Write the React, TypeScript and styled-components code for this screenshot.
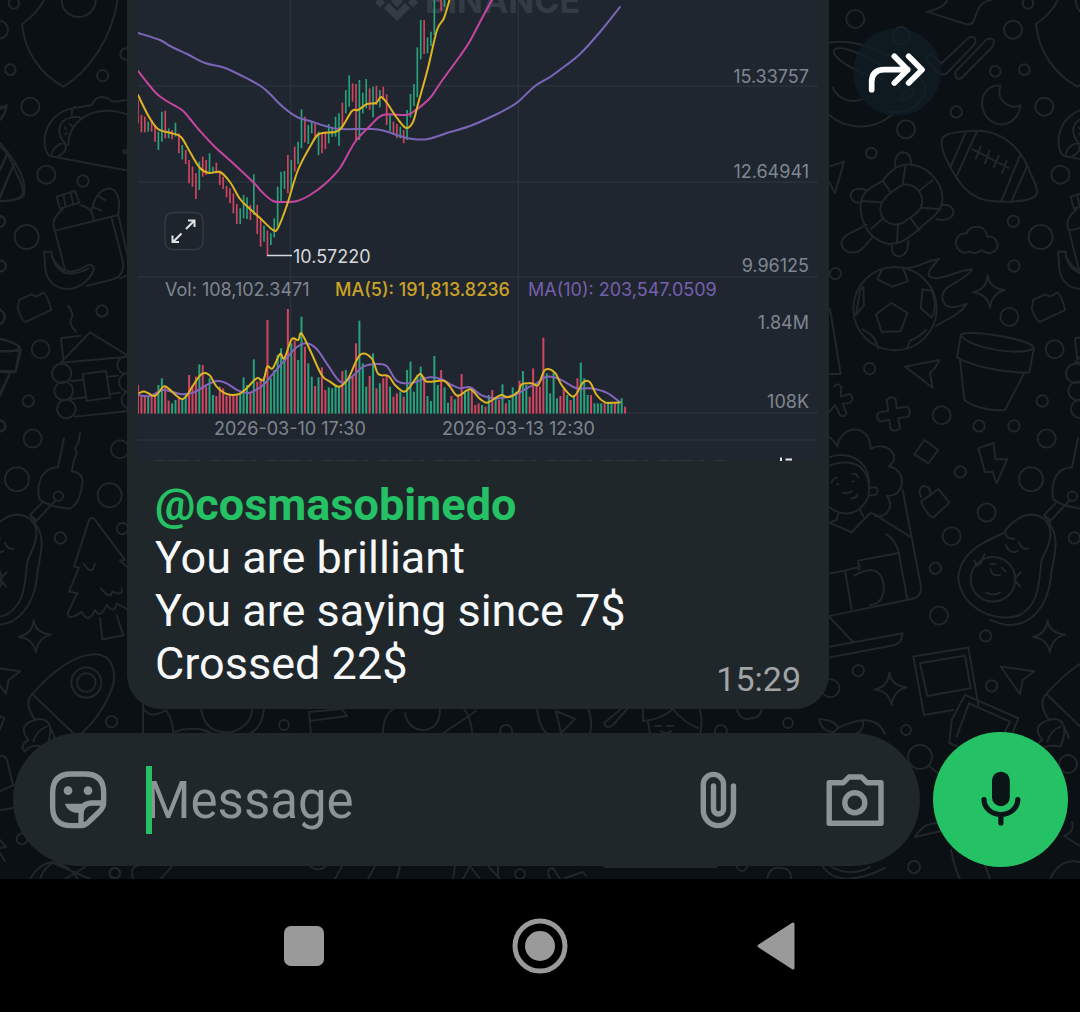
import React from "react";
import styled, { createGlobalStyle } from "styled-components";

const color = {
  wallpaper: "#0a1014",
  doodle: "#20262a",
  surface: "#1f272a",
  accent: "#25c165",
  icon: "#8c9497",
  text: "#f7f8fa",
  time: "#a0a4a6",
  nav: "#9a9a9a",
  up: "#27a27c",
  down: "#d2455f",
  yellow: "#dcb424",
  magenta: "#c645a0",
  purple: "#7a66b8",
  chart: "#20262f",
  grid: "#2b323b",
  label: "#7f8691",
};

const GlobalStyle = createGlobalStyle`
  *, *::before, *::after { box-sizing: border-box; }
  body {
    margin: 0;
    background: #000;
    font-family: Roboto, "Noto Sans", sans-serif;
  }
  button { border: 0; padding: 0; background: none; cursor: pointer; }
  svg { display: block; }
`;

const Screen = styled.div`
  display: flex;
  flex-direction: column;
  min-height: 100vh;
  overflow: hidden;
`;

const Chat = styled.main`
  position: relative;
  isolation: isolate;
  flex: 1;
  display: flex;
  flex-direction: column;
  justify-content: flex-end;
  overflow: hidden;
  background: ${color.wallpaper};
`;

const WallpaperArt = styled.svg`
  position: absolute;
  inset: 0;
  z-index: -1;
  width: 100%;
  height: 100%;
`;

const MessageRow = styled.div`
  display: flex;
  align-items: flex-start;
  gap: 24px;
  padding: 0 139px 0 127px;
`;

const Bubble = styled.article`
  flex: 1;
  min-width: 0;
  border-radius: 0 0 34px 34px;
  background: ${color.surface};
`;

const Photo = styled.figure`
  margin: 0 11px;
  background: ${color.chart};

  svg { width: 100%; height: auto; }
`;

const Caption = styled.div`
  display: flex;
  align-items: flex-end;
  justify-content: space-between;
  padding: 17px 28px 19px;
`;

const CaptionText = styled.p`
  margin: 0;
  color: ${color.text};
  font-size: 45px;
  line-height: 53px;
`;

const Mention = styled.a`
  color: ${color.accent};
  font-weight: 700;
  text-decoration: none;
`;

const Time = styled.time`
  color: ${color.time};
  font-size: 34px;
  line-height: 22px;
`;

const ForwardButton = styled.button`
  flex: none;
  width: 88px;
  height: 88px;
  margin-top: 28px;
  border-radius: 50%;
  background: rgba(17, 28, 36, 0.75);
`;

const Composer = styled.form`
  display: flex;
  align-items: center;
  gap: 13px;
  padding: 23px 12px 12px 13px;
`;

const Field = styled.div`
  flex: 1;
  display: flex;
  align-items: center;
  min-width: 0;
  height: 133px;
  padding: 0 36px;
  border-radius: 67px;
  background: ${color.surface};
`;

const IconButton = styled.button<{ $before?: number }>`
  flex: none;
  width: 58px;
  height: 58px;
  margin-left: ${(p) => p.$before ?? 0}px;
`;

const InputWrap = styled.label`
  position: relative;
  flex: 1;
  min-width: 0;
  margin-left: 39px;
`;

const Caret = styled.span`
  position: absolute;
  left: 0;
  top: 0;
  width: 6px;
  height: 68px;
  background: ${color.accent};
`;

const MessageInput = styled.input`
  display: block;
  width: 100%;
  height: 68px;
  border: 0;
  padding: 2px 0 0;
  outline: 0;
  background: transparent;
  color: ${color.text};
  font: 400 51px/66px Roboto, "Noto Sans", sans-serif;

  &::placeholder { color: ${color.icon}; opacity: 1; }
`;

const MicButton = styled.button`
  flex: none;
  width: 135px;
  height: 135px;
  border-radius: 50%;
  background: ${color.accent};
`;

const NavBar = styled.nav`
  display: flex;
  justify-content: center;
  height: 133px;
  background: #000;
`;

const NavButton = styled.button`
  display: grid;
  place-items: center;
  width: 236px;
`;

/* ---------- chart ---------- */

type Point = [number, number];

// Catmull-Rom spline through the points, as cubic segments.
const smooth = (pts: Point[]) => {
  let d = `M${pts[0][0]} ${pts[0][1]}`;
  for (let i = 0; i < pts.length - 1; i++) {
    const a = pts[i - 1] ?? pts[i];
    const b = pts[i];
    const c = pts[i + 1];
    const e = pts[i + 2] ?? c;
    d += `C${b[0] + (c[0] - a[0]) / 6} ${b[1] + (c[1] - a[1]) / 6} ${c[0] - (e[0] - b[0]) / 6} ${c[1] - (e[1] - b[1]) / 6} ${c[0]} ${c[1]}`;
  }
  return d;
};

const parse = (s: string): Point[] =>
  s.trim().split(/\s+/).map((p) => p.split(",").map(Number) as Point);

const MA_LONG = parse(`138,33 160,40 170,46 187,54 205,63 225,68 250,80 262,87 270,94 283,107 297,117 310,121
 325,126 340,129 372,129 385,131 400,136 413,139 428,139 450,132 470,126 495,115 510,107 519,101 535,86 550,77
 565,66 580,54 600,32 620,7`);
const MA_MID = parse(`138,71 155,92 165,100 182,110 190,119 200,131 215,147 235,165 255,184 262,192 273,201 284,202
 297,201 310,195 325,184 340,168 355,142 370,126 383,115 405,115 413,112 430,98 441,82 460,56 470,41 480,22 493,-2`);
const MA_SHORT = parse(`138,95 149,117 158,129 171,133 181,137 190,152 200,168 209,173 220,172 230,182 240,199 250,209
 262,220 273,230 278,228 287,205 298,170 311,145 319,134 335,132 342,127 352,111 358,110 367,104 376,103 381,97
 387,103 397,118 406,128 413,122 418,104 428,68 437,30 444,18 450,-2`);

const VOL_SHORT = parse(`25,370 45,365 75,378 100,350 115,355 150,385 168,380 190,345 215,312 238,315 260,350 290,372
 325,373 350,355 380,325 400,330 412,290 428,295 450,252 463,265 485,208 505,210 514,190 540,240 575,315 600,335
 628,350 655,325 690,255 725,265 745,312 775,318 795,345 822,365 840,350 870,312 890,335 940,332 960,350 983,378
 1020,358 1048,385 1070,398 1095,385 1115,375 1135,382 1165,365 1175,343 1205,340 1225,345 1245,300 1275,308
 1295,345 1330,380 1360,337 1380,337 1400,375 1425,397 1450,398 1472,397`);
const VOL_LONG = parse(`25,375 60,378 100,360 150,372 190,368 230,345 262,333 290,340 325,362 360,368 400,345 430,310
 465,270 500,232 530,220 560,237 590,280 630,335 660,325 700,290 740,282 770,288 800,332 840,340 900,322 940,330
 965,345 990,355 1020,352 1060,378 1110,385 1160,372 1190,355 1220,340 1250,320 1290,328 1340,355 1380,355
 1430,368 1470,397`);

// high, low, direction for each candle
const CANDLES = `300-370r 345-397r 350-397r 365-395g 360-395r 375-425r 395-450g 335-425g 332-415r 385-415g 390-418r
 368-410g 400-460r 435-478g 450-492r 480-550r 500-560r 520-597r 485-570g 470-530r 480-525r 460-520g 500-520g
 488-520r 512-555r 530-567r 558-592r 565-610r 580-640r 612-672r 625-672g 585-655g 592-657g 615-660r 523-645g
 615-702r 655-740r 677-725g 692-768r 700-735g 655-712g 560-680g 515-605g 513-567g 465-580r 480-570g 440-515r
 425-492g 328-445g 350-427r 375-432g 365-400g 370-410r 395-465g 400-460r 395-447r 372-430g 380-410g 350-410g
 340-437g 308-380r 270-340g 226-320g 250-305r 252-420r 240-420g 278-340g 237-325g 265-330r 260-352g 258-315r
 270-322g 260-300r 283-375r 345-393g 365-405r 372-415r 380-415g 390-430r 330-420g 282-352g 252-318g 142-292g
 60-178g 60-162r 112-160g 95-138g 0-105g 0-2r 0-32r 0-20g`.trim().split(/\s+/);

// top of bar and direction for each period
const VOLUME = `345r 375r 375r 380g 378r 372r 345g 325g 350r 392r 400g 390g 380r 385g 372g 315r 345r 320r 283g 285r
 350r 325g 375g 378r 350r 355r 378r 375r 375r 375r 372g 322g 345g 370r 268g 335r 330r 320g 150r 325g 300g 255g
 235g 265g 117r 220g 212r 270g 140g 230r 280g 320g 348r 322g 292r 360r 352g 355g 348g 350g 303r 300g 325g 320r
 220r 152g 280g 350g 318r 250g 355r 340g 325r 315r 350g 380r 370r 365g 380r 300g 275g 365g 315g 290g 320r 378g
 393g 258g 345g 300r 352g 398g 378r 388g 372r 312r 368g 362g 355r 405r 400r 405g 410r 375g 360r 385g 390r 343g
 400r 390g 352g 365g 332r 303g 345g 380r 295r 345r 350r 203r 310g 370g 308g 385g 378r 355r 375g 390r 375g 325r
 278g 325g 375g 375r 400g 400g 400g 400r 395g 400g 400r 400g 385g 410r`.trim().split(/\s+/);

const STEP = 10.22;
const tone = (s: string) => (s.endsWith("g") ? color.up : color.down);

const chartFont = { fontFamily: "Inter, 'Open Sans', sans-serif" };

const PriceChart = () => (
  <svg viewBox="138 0 680 461" role="img" aria-label="Price and volume chart" style={chartFont}>
    <g stroke={color.grid} strokeWidth="1.5">
      <path d="M138 86H818M138 182H818M138 277H818M621 413H818M138 440H818" />
      <path d="M290.6 0V413M518.3 0V413" />
    </g>

    <g fill="#343b44">
      <path d="M384 8l5-5 8 8 8-8 5 5-13 13zM375 2.500l5-5 5 5-5 5zM408 2.500l5-5 5 5-5 5zM391 1.500l6-6 6 6-6 6z" />
      <text x="425" y="13" fontSize="34" fontWeight="700">BINANCE</text>
    </g>

    <g transform="translate(130 0) scale(.3333)" strokeWidth="5">
      {CANDLES.map((c, i) => {
        const [hi, lo] = c.slice(0, -1).split("-");
        return <path key={i} stroke={tone(c)} d={`M${24 + i * STEP} ${hi}V${lo}`} />;
      })}
    </g>
    <g fill="none" strokeWidth="2" strokeLinejoin="round" strokeLinecap="round">
      <path stroke={color.purple} d={smooth(MA_LONG)} />
      <path stroke={color.magenta} d={smooth(MA_MID)} />
      <path stroke={color.yellow} d={smooth(MA_SHORT)} />
    </g>

    <path d="M267 255.500H292" stroke="#d5d8dc" strokeWidth="1.5" />
    <text x="293" y="263" fontSize="18" fill="#d5d8dc">10.57220</text>

    <rect x="165" y="212.500" width="38" height="37" rx="8" fill="#1e242c" stroke="#333a43" strokeWidth="1.500" />
    <path d="M186 229l8-8M188 220.500h6.500v6.500M181.500 233.500l-8 8M172.500 235.500v6.500h6.500" fill="none" stroke="#dfe2e5" strokeWidth="2" />

    <g fontSize="18" fill={color.label} textAnchor="end">
      <text x="809" y="83">15.33757</text>
      <text x="809" y="178">12.64941</text>
      <text x="809" y="272">9.96125</text>
      <text x="809" y="329">1.84M</text>
      <text x="809" y="408">108K</text>
    </g>

    <g fontSize="18">
      <text x="165" y="296" fill={color.label}>Vol: 108,102.3471</text>
      <text x="335" y="296" fill="#c9a227" fontWeight="500">MA(5): 191,813.8236</text>
      <text x="528" y="296" fill="#7560ae">MA(10): 203,547.0509</text>
      <text x="214" y="435" fill={color.label}>2026-03-10 17:30</text>
      <text x="442" y="435" fill={color.label}>2026-03-13 12:30</text>
    </g>

    <g transform="translate(130 270) scale(.3333)" fill="none">
      {VOLUME.map((v, i) => (
        <path key={i} stroke={tone(v)} strokeWidth="6" d={`M${24 + i * STEP} ${v.slice(0, -1)}V431`} />
      ))}
      <path stroke="#8464bd" strokeWidth="6" d={smooth(VOL_LONG)} />
      <path stroke={color.yellow} strokeWidth="6" d={smooth(VOL_SHORT)} />
    </g>

    <path d="M781 457.500v4M785.500 459.500h6.500" stroke="#e6e8ea" strokeWidth="2" />
    <path d="M155 460.500H730" stroke="#2f363f" strokeWidth="1" strokeDasharray="9 5 20 7 4 11" />
  </svg>
);

/* ---------- wallpaper ---------- */

// x, y, radius
const DOTS: [number, number, number][] = [
  [106, 57, 27], [243, 107, 26], [624, 10, 16], [579, 89, 27], [526, 214, 16], [613, 209, 16],
  [673, 320, 27], [409, 336, 17], [258, 388, 27], [154, 459, 16], [721, 524, 27], [580, 664, 17],
  [662, 711, 36], [582, 798, 17], [46, 821, 17], [568, 951, 27], [704, 1048, 27], [149, 1106, 17],
  [365, 1246, 27], [477, 1278, 17], [582, 1278, 17], [667, 1203, 17], [680, 1316, 27], [421, 1416, 17],
  [633, 1438, 36], [500, 1538, 27], [395, 1609, 27], [763, 1614, 17], [346, 1705, 17], [357, 1847, 27],
  [497, 1908, 17], [115, 2012, 17], [31, 2065, 27], [515, 2058, 17], [911, 1486, 36], [942, 1348, 27],
  [949, 1586, 17], [831, 543, 17], [890, 227, 17], [960, 162, 17], [888, 933, 17],
  [917, 2165, 17], [926, 2620, 16], [648, 2517, 16], [957, 455, 5],
];

const DoodleTile = () => (
  <g id="doodles" fill="none" stroke={color.doodle} strokeWidth="6" strokeLinecap="round" strokeLinejoin="round">
    <g transform="translate(820 0) scale(.3333)">
      {DOTS.map(([x, y, r], i) => <circle key={i} cx={x} cy={y} r={r} />)}
      {/* flag, shield */}
      <path d="M383 -4Q375 25 320 35L440 73Q455 77 462 60C475 25 480 5 515 0" />
      <path d="M716 -4Q695 40 648 72C655 150 700 220 772 260C850 215 920 110 935 -4" />
      <circle cx="818" cy="0" r="51" />
      {/* planet */}
      <path d="M0 135C50 118 110 125 170 150C240 180 310 220 316 262C318 310 260 345 205 335M27 345C80 390 160 392 215 345M200 210C150 170 60 130 42 150C35 175 110 220 190 238M38 262C55 300 95 310 125 298M240 300Q250 275 282 265Q280 300 240 300" />
      {/* sausages */}
      <path d="M365 190L445 114Q462 105 467 120Q467 130 460 137L380 220Q368 228 355 218L318 180Q318 160 338 165L365 192M407 215L500 118Q518 110 522 125Q520 138 515 143L425 234Q408 242 405 222z" />
      {/* moon */}
      <path d="M542 257C500 252 480 290 488 325C500 375 550 383 577 362Q598 345 602 316C570 332 525 300 542 257z" />
      {/* rugby ball */}
      <path d="M365 425C365 400 400 395 470 392C540 390 600 440 625 505C645 550 660 575 645 590C620 607 560 606 520 604C440 600 405 530 385 490Q362 445 365 425M435 402L391 503M470 396L408 532M600 467L545 601M622 497L576 601M458 448L566 504M482 440L468 475M509 452L495 490M536 468L521 503M560 482L546 519" />
      {/* turtle */}
      <path d="M250 495C320 485 370 550 367 600C365 640 330 655 300 685C260 720 235 735 205 732C150 720 120 670 122 615C125 570 160 560 188 542Q220 500 250 495zM250 553C290 553 310 580 306 612C300 640 270 650 250 668C215 685 180 660 181 625C185 590 225 570 250 553M256 500L248 553M338 541L300 570M362 628L306 623M298 690L272 655M231 728L234 675M154 686L187 657M125 603L182 607M188 542L212 577M226 502C222 470 235 457 252 457Q275 460 273 495M137 570C105 560 90 575 92 590C95 605 110 610 125 607M365 615C390 612 402 625 400 640C395 660 370 662 350 658M157 712L128 745C110 762 85 762 70 745Q55 725 80 705L140 675M217 734C212 760 225 770 240 769C260 765 265 745 265 722" />
      {/* cloud */}
      <path d="M425 756C400 745 400 700 440 700C448 672 498 672 502 710C535 705 545 750 515 758Q500 763 485 750Q470 765 450 755Q440 760 425 756z" />
      {/* football */}
      <circle cx="225" cy="926" r="125" />
      <path d="M214 909L262 939L242 994L185 996L168 943zM185 810L172 838L217 860L264 844L250 806M130 860L120 872L108 945L132 915zM308 868L335 872Q355 920 335 953L302 925zM128 988Q160 1005 165 1020L175 1045M262 1045L270 1022Q300 1010 318 990M250 805C300 805 320 780 357 777C325 810 310 835 350 835C390 830 420 810 457 808C430 850 365 850 367 895C375 935 410 920 440 912C420 945 375 960 348 978" />
      {/* sparkles */}
      <path id="sparkle" d="M503 826Q507 865 555 870Q515 880 510 923Q500 880 458 877Q500 868 503 826z" />
      <use href="#sparkle" x="180" y="1034" />
      <use href="#sparkle" x="-295" y="1192" />
      {/* toast */}
      <path d="M635 925L640 900L675 883L690 890L712 878Q722 880 736 930L660 966Q648 965 635 925z" />
      {/* flower pot */}
      <path d="M423 1003C470 990 640 1020 642 1045L628 1117C570 1120 470 1105 411 1072zM425 1008C450 1045 600 1070 640 1045M420 1080L433 1200C460 1220 510 1235 555 1230L612 1120" />
      {/* paper planes */}
      <path d="M255 1100L357 1080Q352 1098 330 1120L338 1163zM542 2000L643 2014L608 2040L600 2082z" />
      <path d="M72 485L27 500M72 485L45 580L27 545M30 927L62 1122H20" />
      {/* asterisk, plus */}
      <path d="M42 1160Q52 1145 64 1160L62 1190L88 1182Q105 1192 92 1208L68 1212L80 1240Q72 1255 60 1245L45 1215L24 1240" />
      <path d="M200 1200Q215 1185 227 1198L230 1225L262 1220Q275 1235 265 1250L235 1255L240 1285Q225 1298 212 1288L208 1260L180 1265Q165 1252 175 1238L205 1232z" />
      {/* tag, bolt, padlock */}
      <path d="M313 1320L355 1350L325 1390L283 1363zM475 1345L521 1329L526 1378L562 1377L530 1450L517 1415L495 1417zM303 1505L355 1467L388 1508L340 1553Q320 1545 303 1505zM303 1490Q292 1465 312 1458Q330 1460 331 1478" />
      {/* person at a laptop */}
      <path d="M22 1310Q40 1315 52 1340C60 1275 150 1265 152 1347C200 1320 250 1370 205 1400C260 1405 260 1490 200 1488C225 1520 200 1555 165 1548M20 1375C70 1350 150 1370 148 1460L145 1490Q120 1545 70 1540Q40 1535 20 1515M20 1400Q80 1375 120 1400Q145 1425 148 1465Q175 1455 173 1475Q170 1490 148 1485M35 1448Q40 1435 50 1433M98 1422Q110 1420 115 1432M50 1453h5M97 1445h5M67 1478Q82 1482 95 1475M95 1495Q110 1495 112 1483M55 1540L50 1560L27 1568L95 1597L150 1540Q165 1540 190 1560L270 1610M120 1530L130 1550M248 1470L303 1760Q305 1785 285 1795L20 1850M197 1602Q235 1625 240 1680L262 1798M232 1660L115 1682L118 1710M20 1722L75 1712L95 1828M102 1727Q190 1680 192 1770Q185 1815 150 1815M75 1712L120 1700M27 1850L98 1925M20 1942L248 1900Q245 1930 225 1935L20 1974" />
      {/* avocado */}
      <path d="M550 1600C580 1560 620 1525 670 1555C710 1590 685 1640 665 1680C655 1750 660 1810 600 1845C530 1870 430 1830 415 1740C415 1660 490 1625 550 1600M690 1575C725 1620 695 1690 693 1730C685 1810 640 1880 560 1875Q540 1872 510 1860" />
      <circle cx="519" cy="1738" r="67" />
      <path d="M556 1598Q560 1620 583 1616M597 1628Q605 1650 624 1646M557 1635Q570 1665 593 1653M463 1682L470 1698L483 1690L493 1663M602 1717L583 1738L600 1760M512 1692h15M545 1703l12 12M511 1707Q515 1730 540 1725M498 1777Q520 1790 540 1778" />
      {/* photos */}
      <path d="M280 1970L445 1943L475 2115M280 1970L312 2145L400 2130M300 1990L435 1967L452 2065L322 2088zM395 2160L435 2085L595 2155L540 2290L388 2230zM410 2210L447 2110L570 2165L535 2235" />
    </g>
    <g transform="translate(1014 0) scale(.3333)">
      {/* taco */}
      <path d="M385 512L150 468C120 450 125 340 220 325L275 315C290 280 320 290 335 303C360 310 365 295 385 303M205 435C205 350 300 310 385 345M200 435C160 400 175 345 240 352M215 345Q215 325 225 320M155 462Q165 430 195 430Q205 455 175 468M195 382l3 5M210 372l8 8M195 403l5-4" />
      {/* bottle, bread and banana */}
      <path d="M170 590L225 573L238 608L180 626zM190 585L197 620M212 580L220 613M188 628C150 660 160 680 165 692L195 810M240 615C280 625 275 640 282 662M165 692L355 645M275 630C290 560 330 560 345 573C365 600 355 625 355 645M298 590L315 600M282 622L305 632M335 655L370 790Q370 830 340 838L260 858M355 645L395 820L360 835M132 755H155V768Q190 840 255 800Q275 785 282 808C250 890 130 890 135 785zM155 768Q180 850 265 805" />
      {/* smoke and log cabin */}
      <path d="M204 918Q225 940 212 960Q208 975 228 995M182 1088L270 997L385 1068M182 1088L385 1070M190 1078L183 1015L242 1007M212 1143L248 1140M325 1130L355 1127M212 1197L258 1192M330 1182L360 1178M225 1250L385 1233M248 1122L318 1113L330 1193L260 1203z" />
      <circle cx="185" cy="1120" r="29" /><circle cx="191" cy="1173" r="28" /><circle cx="199" cy="1227" r="28" />
      <circle cx="378" cy="1095" r="26" /><circle cx="385" cy="1147" r="28" /><circle cx="393" cy="1200" r="28" />
      {/* key */}
      <path d="M192 1315L174 1402C110 1405 110 1480 120 1500C150 1520 180 1525 210 1526C240 1510 245 1470 248 1440Q240 1415 215 1415L222 1380L230 1360L225 1345L235 1330L240 1300" />
      <circle cx="175" cy="1489" r="14" />
      <path d="M168 1500L110 1562L90 1545L130 1505M90 1545L108 1570" />
      {/* fir tree */}
      <path d="M268 1558Q275 1550 285 1560L375 1680L360 1682L385 1705M268 1558L222 1700L237 1703L207 1775L232 1780L203 1840Q205 1865 245 1835Q265 1875 285 1830Q300 1860 320 1815Q345 1845 350 1810L385 1830M300 1855L307 1918L370 1907L350 1845M252 1692Q275 1730 285 1692M303 1765Q330 1800 338 1775Q370 1790 365 1765" />
      {/* rocket */}
      <circle cx="259" cy="2048" r="45" /><circle cx="259" cy="2048" r="28" />
      <path d="M97 2082C160 2010 230 1960 290 1963C350 1970 350 2040 330 2080C300 2150 265 2180 240 2205M97 2082L225 2205M97 2082Q70 2110 105 2160C70 2170 60 2190 85 2220Q55 2240 75 2255Q90 2230 140 2240Q155 2200 150 2180Q140 2150 105 2160M140 2180Q110 2190 100 2225M165 2215L150 2180" />
    </g>
  </g>
);

const Wallpaper = () => (
  <WallpaperArt aria-hidden="true">
    <DoodleTile />
    <use href="#doodles" x="-1014" />
    <g fill="none" stroke={color.doodle} strokeWidth="2" strokeLinecap="round" strokeLinejoin="round">
      {/* left edge */}
      <path d="M0 143Q28 175 24 195Q22 201 0 201M0 170L8 152M0 198L14 164M0 109Q8 106 6 105Q6 115 0 120" />
      <circle cx="-2" cy="317" r="7" /><circle cx="0" cy="222" r="5" /><circle cx="1" cy="266" r="5" /><circle cx="0" cy="426" r="5" />
      <path d="M0 339Q18 342 21 350L16 371H0M0 351H19M10 373L0 396" />
      <path d="M0 756Q5 755 7 760L13 785M0 791L14 785M0 810L14 808M0 840L6 847L0 848M0 853L5 861" />
      {/* between bubble and composer */}
      <path d="M143 704V734M143 708Q150 720 166 710Q174 722 173 734M174 732Q190 726 208 731M201 709Q205 735 232 732Q252 725 252 709M205 731Q260 750 264 709M309 712L342 709L347 716L310 721zM309 712L311 734M383 734Q383 715 393 709M405 713Q408 730 425 730Q440 728 440 709M442 734L476 711M464 709Q472 720 472 734M537 709Q540 730 548 734M556 711L575 719L561 733zM588 709Q593 720 590 734M604 723L621 709M604 723Q606 730 613 725L627 709M643 709V721Q660 720 673 709Q683 722 698 728M648 722L650 734M700 709Q703 722 700 734M655 726h6M667 726h6M661 731Q666 735 671 731M737 709Q740 722 752 718Q760 718 762 709" />
      <path d="M819 719Q835 720 838 728Q875 710 885 734M819 719Q822 732 834 732L838 728M863 721Q865 730 855 734" />
      <circle cx="284" cy="725" r="5" /><circle cx="506" cy="731" r="6" /><circle cx="721" cy="731" r="6" />
      <circle cx="788" cy="723" r="5" /><circle cx="906" cy="730" r="5" />
      {/* around the send button */}
      <circle cx="920" cy="757" r="12" />
      <path d="M929 766L940 775M915 837Q925 820 943 824M915 837L945 830M951 850Q955 870 960 879M985 865L990 879M1050 879Q1060 858 1080 862M1064 836Q1075 832 1072 822M1064 836L1080 846" />
      <circle cx="1068" cy="764" r="9" />
      {/* under the composer */}
      <path d="M30 879Q40 862 55 862Q70 866 78 879M65 879L85 867M40 879Q45 866 53 863L90 879M133 879Q130 867 137 866M172 866Q165 875 160 879M310 866Q318 873 326 866M342 866L335 879M375 866L368 879M400 866L397 879M455 866L453 879M463 879L470 866L480 879M488 866L500 879M498 866V879M550 879Q545 868 553 868L560 879M565 878L583 872L586 876M767 879Q770 866 780 868Q792 868 791 879M823 867Q840 890 885 868M830 866Q850 878 870 867" />
      <circle cx="115" cy="873" r="5" /><circle cx="520" cy="874" r="5" /><circle cx="742" cy="866" r="5" /><circle cx="914" cy="867" r="6" />
    </g>
    <rect x="603" y="862" width="115" height="6" rx="2" fill={color.surface} />
  </WallpaperArt>
);

/* ---------- icons ---------- */

const ForwardIcon = () => (
  <svg viewBox="98 83 264 264" width="88" height="88" fill="none" stroke="#fff" strokeWidth="17" strokeLinecap="round" strokeLinejoin="round">
    <path d="M154 268V246Q154 208 192 208H262M222 168L262 208L222 248M265 168L305 208L265 248" />
  </svg>
);

const StickerIcon = () => (
  <svg viewBox="150 993 174 174" width="58" height="58" fill="none" stroke={color.icon} strokeWidth="16" strokeLinejoin="round">
    <path d="M246 1157H217Q161 1157 161 1102V1058Q161 1002 217 1002H258Q314 1002 314 1058V1088Q314 1102 300 1116L272 1143Q259 1157 246 1157V1124Q246 1089 280 1089H312" />
    <path d="M197 1091H262Q242 1100 240 1119Q207 1118 197 1091z" fill={color.icon} stroke="none" />
    <circle cx="207" cy="1052" r="13" fill={color.icon} stroke="none" />
    <circle cx="267" cy="1052" r="13" fill={color.icon} stroke="none" />
  </svg>
);

const ClipIcon = () => (
  <svg viewBox="690 771 58 58" width="58" height="58" fill="none" stroke={color.icon} strokeWidth="5.400" strokeLinecap="round">
    <path d="M733.500 786V810a15.100 15.600 0 0 1-30.200 0V784.500a10.100 10.100 0 0 1 20.200 0V809a5 5 0 0 1-10 0V786" />
  </svg>
);

const CameraIcon = () => (
  <svg viewBox="826 771 58 58" width="58" height="58" fill="none" stroke={color.icon} strokeWidth="5.400" strokeLinejoin="round">
    <path d="M829.200 782.700H843.500L849 777H861.500L867 782.700H881V823.300H829.200z" />
    <circle cx="854.800" cy="802.700" r="10" />
  </svg>
);

const MicIcon = () => (
  <svg viewBox="933 732 135 135" width="135" height="135" fill="none" stroke="#0b1417" strokeWidth="5.200" strokeLinecap="round">
    <rect x="992" y="771.700" width="17.800" height="34.500" rx="8.900" fill="#0b1417" stroke="none" />
    <path d="M984 799.500a16.900 15 0 0 0 33.800 0M1000.900 815V823" />
  </svg>
);

const App = () => (
  <Screen>
    <GlobalStyle />
    <Chat>
      <Wallpaper />
      <MessageRow>
        <Bubble>
          <Photo>
            <PriceChart />
          </Photo>
          <Caption>
            <CaptionText>
              <Mention href="#cosmasobinedo">@cosmasobinedo</Mention>
              <br />
              You are brilliant
              <br />
              You are saying since 7$
              <br />
              Crossed 22$
            </CaptionText>
            <Time>15:29</Time>
          </Caption>
        </Bubble>
        <ForwardButton type="button" aria-label="Forward">
          <ForwardIcon />
        </ForwardButton>
      </MessageRow>
      <Composer onSubmit={(e) => e.preventDefault()}>
        <Field>
          <IconButton type="button" aria-label="Stickers">
            <StickerIcon />
          </IconButton>
          <InputWrap>
            <MessageInput type="text" placeholder="Message" aria-label="Message" />
            <Caret />
          </InputWrap>
          <IconButton type="button" aria-label="Attach">
            <ClipIcon />
          </IconButton>
          <IconButton type="button" aria-label="Camera" $before={78}>
            <CameraIcon />
          </IconButton>
        </Field>
        <MicButton type="button" aria-label="Record voice message">
          <MicIcon />
        </MicButton>
      </Composer>
    </Chat>
    <NavBar aria-label="System navigation">
      <NavButton type="button" aria-label="Recent apps">
        <svg width="40" height="40">
          <rect width="40" height="40" rx="7" fill={color.nav} />
        </svg>
      </NavButton>
      <NavButton type="button" aria-label="Home">
        <svg width="56" height="56" viewBox="0 0 56 56">
          <circle cx="28" cy="28" r="25" fill="none" stroke={color.nav} strokeWidth="5" />
          <circle cx="28" cy="28" r="15" fill={color.nav} />
        </svg>
      </NavButton>
      <NavButton type="button" aria-label="Back">
        <svg width="38" height="48" viewBox="0 0 38 48">
          <path d="M2 24L36 2V46z" fill={color.nav} stroke={color.nav} strokeWidth="3" strokeLinejoin="round" />
        </svg>
      </NavButton>
    </NavBar>
  </Screen>
);

export default App;
